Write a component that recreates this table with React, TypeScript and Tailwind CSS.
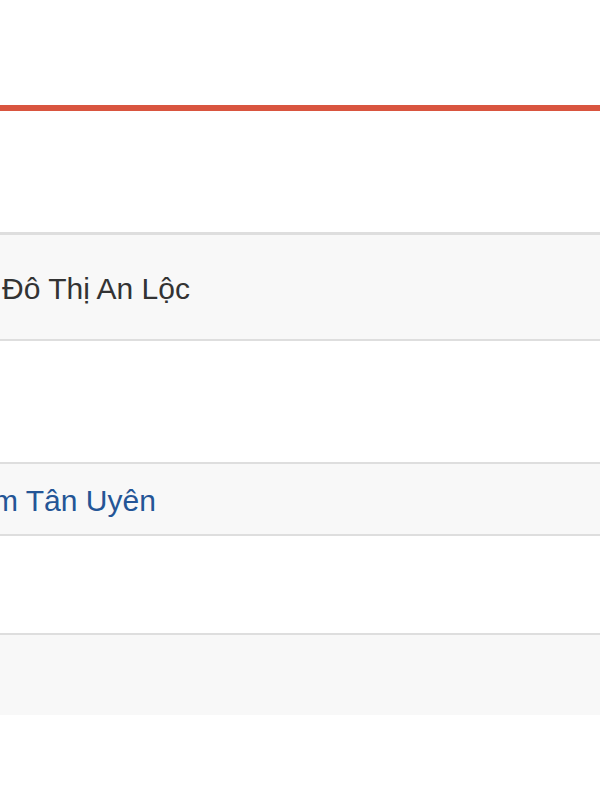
export default function App() {
  return (
    <div className="w-[600px] h-[800px] bg-white overflow-hidden" style={{ fontFamily: '"Liberation Sans", Arial, sans-serif' }}>
      <div className="h-[105px]" />
      <div className="h-[6px] bg-[#d9553f]" />
      <div className="h-[121px]" />
      <div className="border-t-[3px] border-b-2 border-[#dedede] bg-[#f8f8f8] h-[109px] flex items-center">
        <span className="pl-[2px] pt-[3px] text-[30px] leading-none text-[#333333]">Đô Thị An Lộc</span>
      </div>
      <div className="h-[121px]" />
      <div className="border-t-2 border-b-2 border-[#dedede] bg-[#f8f8f8] h-[74px] flex items-center overflow-hidden">
        <span className="-ml-[7px] pt-[3px] text-[30px] leading-none text-[#245596]">m Tân Uyên</span>
      </div>
      <div className="h-[97px]" />
      <div className="border-t-2 border-[#dedede] bg-[#f8f8f8] h-[82px]" />
    </div>
  );
}
